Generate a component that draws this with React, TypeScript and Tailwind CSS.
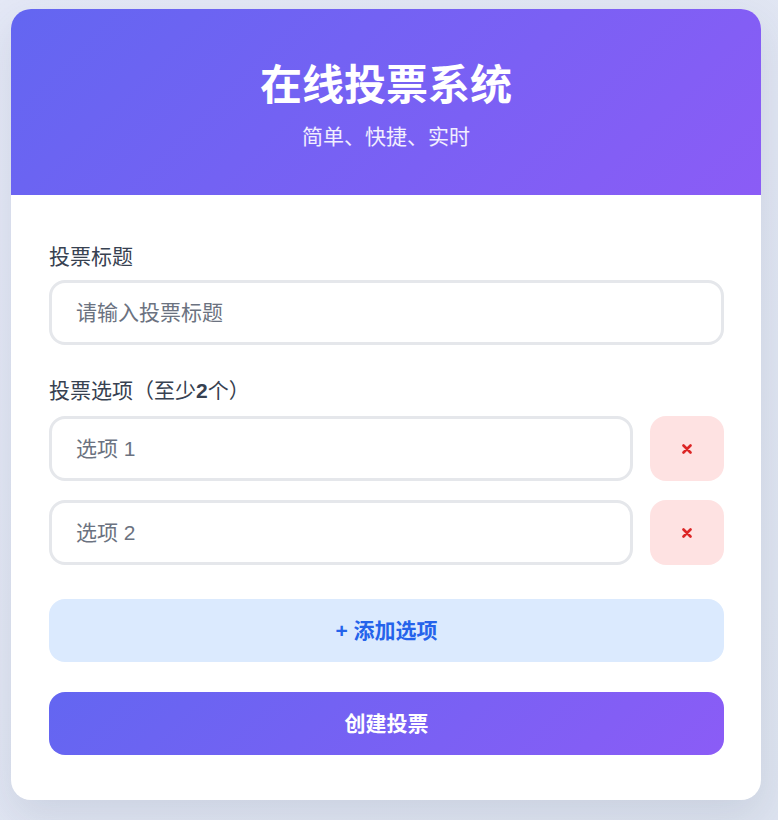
import React from "react";

const font = { fontFamily: '"Liberation Sans", "Noto Sans CJK SC", sans-serif' };

function XIcon() {
  return (
    <svg width="10" height="10" viewBox="0 0 10 10" aria-hidden="true">
      <path d="M1.5 1.5 L8.5 8.5 M8.5 1.5 L1.5 8.5" stroke="#dc2626" strokeWidth="2.6" strokeLinecap="round" />
    </svg>
  );
}

export default function App() {
  return (
    <div
      className="min-h-[820px] w-full bg-gradient-to-br from-[#e4e8f6] to-[#dde3ef] pl-[11px] pt-[9px]"
      style={font}
    >
      <div className="w-[750px] overflow-hidden rounded-[20px] bg-white shadow-[0_16px_40px_rgba(60,70,110,0.12)]">
        <div className="flex flex-col items-center bg-[linear-gradient(135deg,#6366f1,#8b5cf6)] pb-[43px] pt-[45px] text-white">
          <h1 className="text-[42px] font-bold leading-[63px]">在线投票系统</h1>
          <p className="mt-[4px] text-[21px] leading-[31px] text-white/90">简单、快捷、实时</p>
        </div>
        <div className="flex flex-col pb-[45px] pl-[38px] pr-[37px] pt-[46px]">
          <label className="mb-[8px] text-[21px] leading-[31px] text-[#374151]">投票标题</label>
          <input
            className="h-[65px] w-full rounded-[16px] border-[3px] border-[#e5e7eb] px-[24px] text-[21px] text-[#374151] outline-none placeholder:text-[#6b7280]"
            placeholder="请输入投票标题"
            style={font}
          />
          <label className="mb-[10px] mt-[30px] text-[21px] leading-[31px] text-[#374151]">
            投票选项（至少<span className="font-bold">2</span>个）
          </label>
          <div className="flex flex-col gap-[19px]">
            {["选项 1", "选项 2"].map((p) => (
              <div key={p} className="flex gap-[17px]">
                <input
                  className="h-[65px] flex-1 rounded-[16px] border-[3px] border-[#e5e7eb] px-[24px] text-[21px] text-[#374151] outline-none placeholder:text-[#6b7280]"
                  placeholder={p}
                  style={font}
                />
                <button className="flex h-[65px] w-[74px] items-center justify-center rounded-[16px] bg-[#fee2e2]">
                  <XIcon />
                </button>
              </div>
            ))}
          </div>
          <button className="mt-[34px] flex h-[63px] w-full items-center justify-center rounded-[16px] bg-[#dbeafe] text-[21px] font-bold text-[#2563eb]">
            + 添加选项
          </button>
          <button className="mt-[30px] flex h-[63px] w-full items-center justify-center rounded-[16px] bg-[linear-gradient(135deg,#6366f1,#8b5cf6)] text-[21px] font-bold text-white">
            创建投票
          </button>
        </div>
      </div>
    </div>
  );
}
